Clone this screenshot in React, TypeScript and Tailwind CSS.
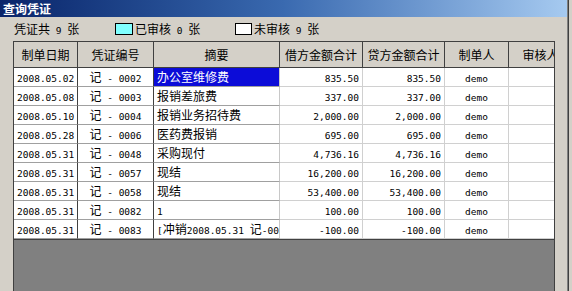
import React from "react";

const ASCII = "font-['DejaVu_Sans_Mono',monospace] text-[9.5px]";

function Mix({ s }: { s: string }) {
  return (
    <>
      {s
        .split(/([ -~]+)/)
        .filter(Boolean)
        .map((p, i) =>
          /^[ -~]+$/.test(p) ? (
            <span key={i} className={ASCII}>
              {p}
            </span>
          ) : (
            <span key={i}>{p}</span>
          )
        )}
    </>
  );
}

const rows = [
  ["2008.05.02", "记 - 0002", "办公室维修费", "835.50", "835.50"],
  ["2008.05.08", "记 - 0003", "报销差旅费", "337.00", "337.00"],
  ["2008.05.10", "记 - 0004", "报销业务招待费", "2,000.00", "2,000.00"],
  ["2008.05.28", "记 - 0006", "医药费报销", "695.00", "695.00"],
  ["2008.05.31", "记 - 0048", "采购现付", "4,736.16", "4,736.16"],
  ["2008.05.31", "记 - 0057", "现结", "16,200.00", "16,200.00"],
  ["2008.05.31", "记 - 0058", "现结", "53,400.00", "53,400.00"],
  ["2008.05.31", "记 - 0082", "1", "100.00", "100.00"],
  ["2008.05.31", "记 - 0083", "[冲销2008.05.31 记-0083]", "-100.00", "-100.00"],
];

const headers = ["制单日期", "凭证编号", "摘要", "借方金额合计", "贷方金额合计", "制单人", "审核人"];
const widths = ["w-[64px]", "w-[76px]", "w-[126px]", "w-[83px]", "w-[82px]", "w-[64px]", "w-[64px]"];

export default function App() {
  return (
    <div className="w-[572px] h-[291px] bg-[#d4d0c8] flex overflow-hidden font-['Noto_Sans_CJK_SC',sans-serif] text-[12px] text-black">
      <div className="w-[567px] flex flex-col">
        {/* title bar */}
        <div className="h-[17px] bg-gradient-to-r from-[#0a246a] via-[#3a6ab0] to-[#a6caf0] flex items-center pl-[3px]">
          <span className="text-white font-bold leading-none">查询凭证</span>
        </div>

        {/* counts */}
        <div className="h-[24px] flex items-center pl-[14px] leading-none">
          <span className="w-[101px]">
            <Mix s="凭证共 9 张" />
          </span>
          <span className="w-[18px] h-[12px] bg-[#80ffff] border border-black" />
          <span className="w-[102px] pl-[2px]">
            <Mix s="已审核 0 张" />
          </span>
          <span className="w-[17px] h-[12px] bg-white border border-black" />
          <span className="pl-[2px]">
            <Mix s="未审核 9 张" />
          </span>
        </div>

        {/* grid */}
        <div className="flex-1 flex">
          <div className="w-[13px]" />
          <div className="w-[542px] flex flex-col border-l border-r border-t border-[#404040] overflow-hidden">
            <div className="flex h-[26px] shrink-0 border-b border-[#404040] bg-[#d4d0c8]">
              {headers.map((h, i) => (
                <div
                  key={h}
                  className={`${widths[i]} shrink-0 flex items-center justify-center border-r border-[#404040] whitespace-nowrap`}
                >
                  {h}
                </div>
              ))}
            </div>
            {rows.map((r, ri) => (
              <div key={ri} className="flex h-[19px] shrink-0 bg-white leading-[18px]">
                <div className="w-[64px] shrink-0 border-r border-b border-r-[#404040] border-b-[#a0a0a0] pl-[3px] whitespace-nowrap overflow-hidden">
                  <Mix s={r[0]} />
                </div>
                <div className="w-[76px] shrink-0 border-r border-b border-r-[#404040] border-b-[#a0a0a0] text-center whitespace-nowrap">
                  <Mix s={r[1]} />
                </div>
                <div
                  className={`w-[126px] shrink-0 border-r border-b border-r-[#c8c8c8] border-b-[#a0a0a0] pl-[3px] whitespace-nowrap overflow-hidden ${
                    ri === 0 ? "bg-[#0c0cd8] text-white" : ""
                  }`}
                >
                  <Mix s={r[2]} />
                </div>
                <div className="w-[83px] shrink-0 border-r border-b border-[#d0d0d0] text-right pr-[3px] whitespace-nowrap">
                  <Mix s={r[3]} />
                </div>
                <div className="w-[82px] shrink-0 border-r border-b border-[#d0d0d0] text-right pr-[3px] whitespace-nowrap">
                  <Mix s={r[4]} />
                </div>
                <div className="w-[64px] shrink-0 border-r border-b border-[#d0d0d0] text-center">
                  <span className={ASCII}>demo</span>
                </div>
                <div className="w-[64px] shrink-0 border-r border-b border-[#d0d0d0]" />
              </div>
            ))}
            <div className="flex-1 bg-[#808080] border-t border-[#404040]" />
          </div>
          <div className="flex-1" />
        </div>
      </div>
      <div className="w-[5px] flex">
        <div className="w-[1px] bg-[#808080]" />
        <div className="w-[1px] bg-[#404040]" />
        <div className="flex-1 bg-[#d4d0c8]" />
      </div>
    </div>
  );
}
